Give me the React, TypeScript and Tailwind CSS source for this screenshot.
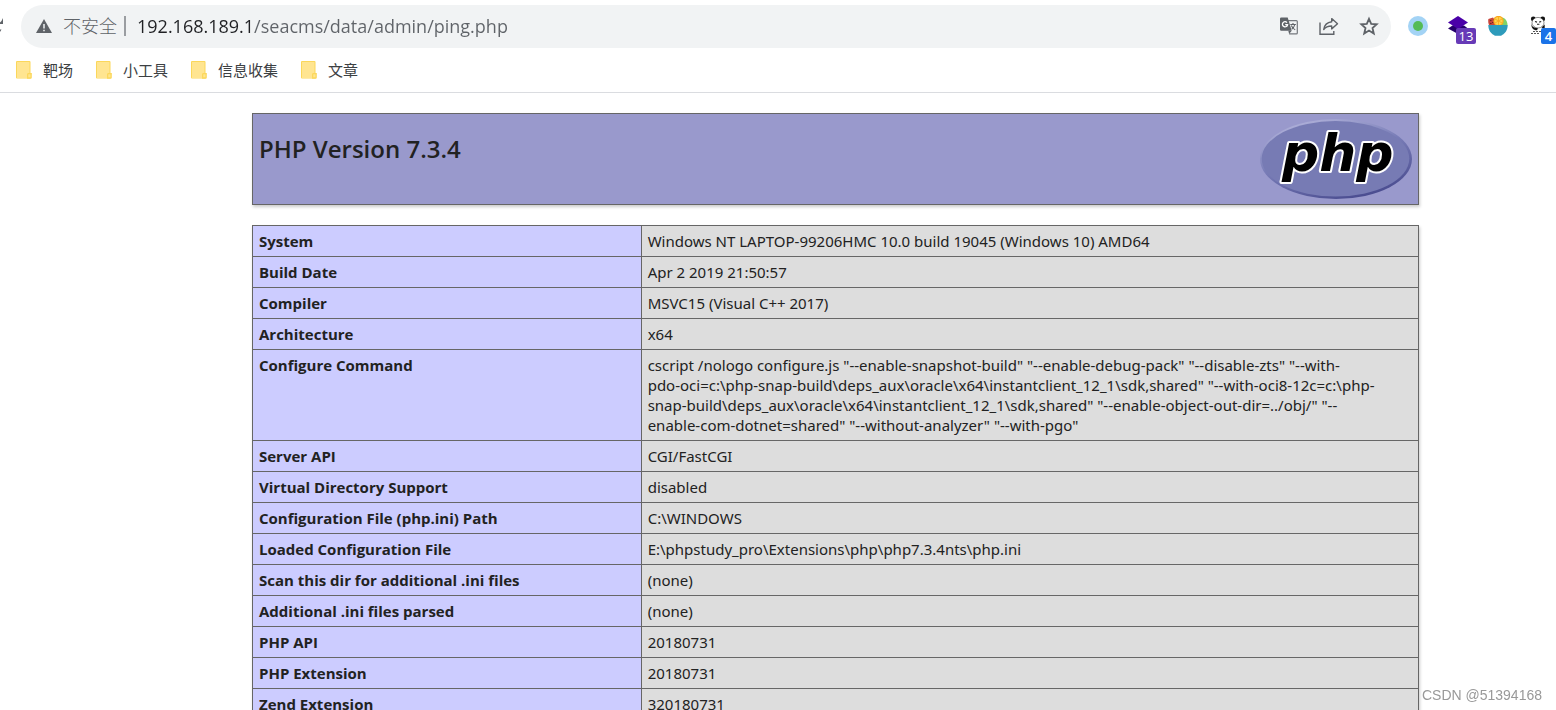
import type { ReactNode } from "react";

const bookmarks = ["靶场", "小工具", "信息收集", "文章"];

const configureCommand = [
  'cscript /nologo configure.js "--enable-snapshot-build" "--enable-debug-pack" "--disable-zts" "--with-',
  'pdo-oci=c:\\php-snap-build\\deps_aux\\oracle\\x64\\instantclient_12_1\\sdk,shared" "--with-oci8-12c=c:\\php-',
  'snap-build\\deps_aux\\oracle\\x64\\instantclient_12_1\\sdk,shared" "--enable-object-out-dir=../obj/" "--',
  'enable-com-dotnet=shared" "--without-analyzer" "--with-pgo"',
].join("\n");

const rows: [string, string][] = [
  ["System", "Windows NT LAPTOP-99206HMC 10.0 build 19045 (Windows 10) AMD64"],
  ["Build Date", "Apr 2 2019 21:50:57"],
  ["Compiler", "MSVC15 (Visual C++ 2017)"],
  ["Architecture", "x64"],
  ["Configure Command", configureCommand],
  ["Server API", "CGI/FastCGI"],
  ["Virtual Directory Support", "disabled"],
  ["Configuration File (php.ini) Path", "C:\\WINDOWS"],
  ["Loaded Configuration File", "E:\\phpstudy_pro\\Extensions\\php\\php7.3.4nts\\php.ini"],
  ["Scan this dir for additional .ini files", "(none)"],
  ["Additional .ini files parsed", "(none)"],
  ["PHP API", "20180731"],
  ["PHP Extension", "20180731"],
  ["Zend Extension", "320180731"],
];

function IconButton({ label, children }: { label: string; children: ReactNode }) {
  return (
    <button type="button" aria-label={label} className="relative flex h-5 w-5 shrink-0 items-center justify-center">
      {children}
    </button>
  );
}

function FolderIcon() {
  return (
    <svg viewBox="0 0 16 18" className="h-[18px] w-4 shrink-0" aria-hidden="true">
      <path d="M1 0h12.5a1 1 0 0 1 1 1v16.5H1a1 1 0 0 1-1-1V1a1 1 0 0 1 1-1z" fill="#fbd75b" />
      <path d="M1 1h12.5v16H1z" fill="#ffe591" />
      <path d="M11 17.7v-4.2c0-1 .7-1.5 1.5-1.5h3.3v4.2c0 1-.6 1.500-1.500 1.500z" fill="#fbd75b" />
      <path d="M12.3 16.3v-3h2.2v3z" fill="#ffe591" />
    </svg>
  );
}

function TranslateIcon() {
  return (
    <svg viewBox="0 0 20 20" className="h-5 w-5" aria-hidden="true">
      <path d="M9 4.600h8.300a1 1 0 0 1 1 1v11.300a1 1 0 0 1-1 1h-7.200" fill="none" stroke="#74787d" strokeWidth="1.2" />
      <path d="M2.300 1.500h6.400l4 13.200H2.300a1.300 1.300 0 0 1-1.300-1.300V2.800a1.300 1.300 0 0 1 1.300-1.300z" fill="#5f6368" />
      <path d="M8 6.600a2.600 2.600 0 1 0 .6 2H6.200" fill="none" stroke="#fff" strokeWidth="1.3" />
      <path
        d="M11.300 8.500h5.600M14 7v1.500M15.800 8.500c-.4 2-1.800 3.700-3.100 4.700M12.300 9.500c.7 1.700 2 3.200 3.900 4.400"
        fill="none"
        stroke="#5f6368"
        strokeWidth="1.1"
      />
      <path d="M9.300 14.700h3.400l-2.600 3.200z" fill="#5f6368" />
    </svg>
  );
}

function ShareIcon() {
  return (
    <svg viewBox="0 0 20 20" className="h-5 w-5" fill="none" stroke="#5f6368" strokeWidth="1.4" aria-hidden="true">
      <path d="M1 6.500v11.800h13.800v-3.200" />
      <path d="M12.700 2.600l5.800 5.200-5.800 5.100V10c-3.700 0-6.200 1-8 3.500.6-4 3-7 8-7.700z" strokeLinejoin="round" />
    </svg>
  );
}

function StarIcon() {
  return (
    <svg viewBox="0 0 20 20" className="h-5 w-5" aria-hidden="true">
      <path
        d="M10 2.800l2.200 5 5.500.5-4.200 3.700 1.300 5.500-4.800-2.900-4.800 2.900L6.500 12 2.300 8.300l5.500-.5z"
        fill="none"
        stroke="#5f6368"
        strokeWidth="1.8"
      />
    </svg>
  );
}

function BowlIcon() {
  return (
    <svg viewBox="0 0 20 20" className="h-5 w-5" aria-hidden="true">
      <path d="M14.500 1.500c3 1.200 5 3.500 5 7.800h-8z" fill="#7ed36a" />
      <path d="M.4 3l4.600-1.500L11 9.500H1.200C.2 7.300 0 5 .4 3z" fill="#c8443a" />
      <path d="M2.200 4.500h1.200M4.200 6.500h1.200M2.200 7.500h1.200M5 4h1" stroke="#5a1f1c" strokeWidth="1" />
      <circle cx="10.500" cy="5" r="5.200" fill="#f9a61c" />
      <circle cx="10.500" cy="5" r="4" fill="#ffd34d" />
      <path d="M10.500 1v8M7 3l7 4M14 3L7 7" stroke="#f9a61c" strokeWidth=".8" />
      <path d="M.3 9h19.400c0 5-2.600 8.700-5.700 10a2 2 0 0 1-1 .8H7a2 2 0 0 1-1-.8C2.900 17.700.3 14 .3 9z" fill="#2e9bbb" />
    </svg>
  );
}

function PandaIcon() {
  return (
    <svg viewBox="0 0 20 20" className="h-5 w-5" aria-hidden="true">
      <circle cx="5.300" cy="3" r="2.400" fill="#111" />
      <circle cx="14.700" cy="3" r="2.400" fill="#111" />
      <ellipse cx="10" cy="6.700" rx="6" ry="5.300" fill="#fff" stroke="#444" strokeWidth=".6" />
      <path d="M7 5.500l2 .6M11.200 6.100l2-.6M9 8.300h2.400" stroke="#222" strokeWidth="1.1" />
      <path d="M3.500 7c-.2 3.300 2 5 6.500 5.300l-1 2C5 14.300 2.800 11.500 3.500 7zM13.500 11.500l3.200-3v4.500z" fill="#111" />
      <path d="M5 15.500h8M3 17.500h8" stroke="#555" strokeWidth="1" strokeDasharray="2 1" />
    </svg>
  );
}

function PhpLogo() {
  return (
    <svg viewBox="0 0 152 80" className="h-20 w-[152px] shrink-0" role="img" aria-label="PHP logo">
      <defs>
        <linearGradient id="rim" x1="0.2" y1="0" x2="0.7" y2="1">
          <stop offset="0" stopColor="#b4b5dc" />
          <stop offset="0.45" stopColor="#7a7eb8" />
          <stop offset="1" stopColor="#484a8e" />
        </linearGradient>
      </defs>
      <ellipse cx="76" cy="40" rx="76" ry="40" fill="url(#rim)" />
      <ellipse cx="75.500" cy="39.800" rx="73.800" ry="37.800" fill="#777bb4" />
      <text
        x="22"
        y="52"
        fontFamily="DejaVu Sans, Verdana, sans-serif"
        fontSize="52"
        fontWeight="700"
        fontStyle="italic"
        fill="#000"
        stroke="#fff"
        strokeWidth="4"
        strokeLinejoin="round"
        paintOrder="stroke"
      >
        php
      </text>
    </svg>
  );
}

function Toolbar() {
  return (
    <div className="flex h-[43px] items-center">
      <button type="button" aria-label="Reload" className="mr-[17px] mb-0.5 h-5 w-1 shrink-0">
        <svg viewBox="0 0 4 20" className="h-5 w-1" aria-hidden="true">
          <path d="M3 2v6H0V6.500L1.500 5zM0 13.500h1.500L0 16z" fill="#5f6368" />
        </svg>
      </button>
      <div className="flex h-[43px] min-w-0 flex-1 items-center rounded-full bg-[#f1f3f4] pr-3 pb-0.5 pl-[15px]">
        <svg viewBox="0 0 16 14" className="h-[14px] w-4 shrink-0" aria-hidden="true">
          <path d="M8 0l8 14H0z" fill="#5f6368" />
          <path d="M8 5v4.500M8 10.700v1.500" stroke="#f1f3f4" strokeWidth="1.5" />
        </svg>
        <label htmlFor="address" className="ml-[11px] shrink-0 text-lg font-light text-[#5f6368]">
          不安全
        </label>
        <span className="mx-[7px] h-5 w-[2px] shrink-0 bg-[#9a9da1]" />
        <input
          id="address"
          type="text"
          defaultValue="192.168.189.1/seacms/data/admin/ping.php"
          className="ml-1 min-w-0 flex-1 bg-[linear-gradient(to_right,#202124_116px,#5f6368_116px)] bg-clip-text text-lg text-transparent outline-none"
        />
        <div className="flex shrink-0 items-center gap-5">
          <IconButton label="Translate">
            <TranslateIcon />
          </IconButton>
          <IconButton label="Share">
            <ShareIcon />
          </IconButton>
          <IconButton label="Bookmark">
            <StarIcon />
          </IconButton>
        </div>
      </div>
      <div className="mr-2 mb-0.5 ml-[17px] flex shrink-0 items-center gap-5">
        <IconButton label="Status">
          <svg viewBox="0 0 20 20" className="h-5 w-5" aria-hidden="true">
            <circle cx="10" cy="10" r="10" fill="#a3d3f5" />
            <circle cx="10" cy="10" r="5" fill="#55bb55" />
          </svg>
        </IconButton>
        <IconButton label="Layers">
          <svg viewBox="0 0 20 20" className="h-5 w-5" aria-hidden="true">
            <path d="M4.500 9.500L0 12.500 10 18l10-5.500-4-3z" fill="#26006b" />
            <path d="M10 0l10 6.500L10 13 0 6.500z" fill="#4a00a8" />
          </svg>
          <span className="absolute top-3 left-2 h-4 w-5 rounded-xs bg-[#673ab7] text-center text-[13px] leading-4 text-white">
            13
          </span>
        </IconButton>
        <IconButton label="Fruit bowl">
          <BowlIcon />
        </IconButton>
        <IconButton label="Panda">
          <PandaIcon />
          <span className="absolute top-3 left-[13px] h-4 w-[15px] rounded-xs bg-[#1a73e8] text-center text-[13px] leading-4 font-semibold text-white">
            4
          </span>
        </IconButton>
      </div>
    </div>
  );
}

export default function App() {
  return (
    <div className="flex h-screen flex-col overflow-hidden bg-white font-['Open_Sans','Noto_Sans_CJK_SC',sans-serif] text-[#222]">
      <header className="shrink-0 border-b border-[#dadce0] pt-[5px]">
        <Toolbar />
        <nav aria-label="Bookmarks" className="flex h-11 items-center gap-[23px] pl-4">
          {bookmarks.map((name) => (
            <a key={name} href="#" className="flex items-center gap-[11px] text-[15px] text-[#3c4043]">
              <FolderIcon />
              {name}
            </a>
          ))}
        </nav>
      </header>

      <main className="min-h-0 flex-1 overflow-hidden pt-5 pr-[137px] pl-[252px]">
        <div className="mb-5 flex h-[92px] justify-between border border-[#666] bg-[#9999cc] px-[6px] py-[5px] shadow-[1px_2px_3px_#ccc]">
          <h1 className="pt-3 text-2xl leading-9 font-semibold">PHP Version 7.3.4</h1>
          <PhpLogo />
        </div>
        <table className="w-full table-fixed border-collapse font-['Noto_Sans',sans-serif] text-[15px] leading-5 shadow-[1px_2px_3px_#ccc]">
          <tbody>
            {rows.map(([name, value]) => (
              <tr key={name}>
                <th
                  scope="row"
                  className="w-1/3 border border-[#666] bg-[#ccccff] px-[6px] py-[5px] text-left align-top font-['Open_Sans',sans-serif] font-bold"
                >
                  {name}
                </th>
                <td className="border border-[#666] bg-[#dddddd] px-[6px] py-[5px] align-top break-words whitespace-pre-line">
                  {value}
                </td>
              </tr>
            ))}
          </tbody>
        </table>
      </main>

      <p className="fixed right-[14px] bottom-[5px] font-['Liberation_Sans',sans-serif] text-[14px] leading-5 text-[#999]">
        CSDN @51394168
      </p>
    </div>
  );
}
